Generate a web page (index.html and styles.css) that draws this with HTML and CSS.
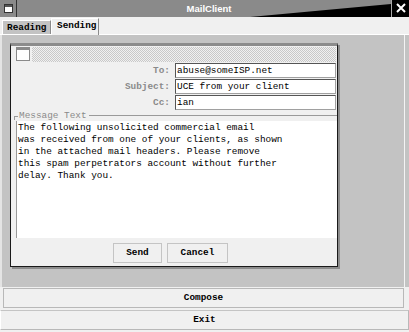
FILE: index.html
```html
<!DOCTYPE html>
<html>
<head>
<meta charset="utf-8">
<link rel="stylesheet" href="styles.css">
</head>
<body>
<div class="app">
  <div class="titlebar">
    <div class="ticon">
      <svg width="17" height="17" viewBox="0 0 17 17"><rect x="4.5" y="4.5" width="8" height="8" fill="#fff" stroke="#333"/><rect x="5" y="5" width="7" height="2" fill="#555"/></svg>
    </div>
    <div class="ttitle">MailClient</div>
    <div class="tclose">
      <svg width="18" height="17" viewBox="0 0 18 17"><path d="M5 4 L13 12 M13 4 L5 12" stroke="#fff" stroke-width="2"/></svg>
    </div>
  </div>
  <div class="tabs">
    <div class="tab">Reading</div>
    <div class="tab active">Sending</div>
  </div>
  <div class="panel">
    <div class="win">
      <div class="wtitle">
        <div class="wicon"></div>
        <div class="stipple"></div>
      </div>
      <div class="row"><div class="lbl">To:</div><div class="inp">abuse@someISP.net</div></div>
      <div class="row"><div class="lbl">Subject:</div><div class="inp">UCE from your client</div></div>
      <div class="row"><div class="lbl">Cc:</div><div class="inp">ian</div></div>
      <div class="group">
        <div class="legend"><span class="lead"></span><span class="ltext">Message Text</span><span class="tail"></span></div>
        <div class="msg">The following unsolicited commercial email
was received from one of your clients, as shown
in the attached mail headers. Please remove
this spam perpetrators account without further
delay. Thank you.</div>
      </div>
      <div class="btns">
        <div class="btn send">Send</div>
        <div class="btn cancel">Cancel</div>
      </div>
    </div>
  </div>
  <div class="bigbtn compose">Compose</div>
  <div class="bigbtn exit">Exit</div>
</div>
</body>
</html>
```
FILE: styles.css
```css
html, body { margin: 0; padding: 0; }
body { background: #f0f0f0; font-family: "Liberation Mono", monospace; font-size: 9.4px; color: #000; }
.app { width: 409px; height: 332px; overflow: hidden; display: flex; flex-direction: column; }
.titlebar { position: relative; height: 17px; display: flex; background: #8a8a8a; box-sizing: border-box; }
.titlebar::before { content: ""; position: absolute; left: 0; top: 0; width: 391px; height: 17px; background: #000; clip-path: polygon(250px 17px, 391px 4px, 391px 17px); }
.ticon { position: relative; width: 17px; height: 17px; background: #8a8a8a; border-right: 1px solid #333; box-sizing: border-box; }
.ticon svg { display: block; }
.ttitle { position: relative; flex: 1; text-align: center; color: #fff; font-family: "Liberation Sans", Arial, sans-serif; font-weight: bold; font-size: 9.5px; line-height: 17px; padding-left: 10px; }
.tclose { position: relative; width: 18px; height: 17px; background: #000; border-left: 1px solid #aaa; box-sizing: border-box; }
.tclose svg { display: block; }
.tabs { height: 18px; display: flex; align-items: flex-end; padding-left: 2px; box-sizing: border-box; border-bottom: 1px solid #fff; }
.tab { font-weight: bold; height: 14px; line-height: 13px; width: 49px; box-sizing: border-box; padding-left: 4px; background: #c3c3c3; border-top: 1px solid #fff; border-left: 1px solid #fff; border-right: 1px solid #8a8a8a; }
.tab.active { height: 17px; line-height: 14px; width: 48px; background: #f0f0f0; margin-bottom: -1px; border-top: 1px solid #fff; border-left: 1px solid #fff; border-right: 1px solid #8a8a8a; padding-left: 5px; }
.panel { height: 252px; background: #c3c3c3; border-left: 2px solid #e4e4e4; box-sizing: border-box; box-shadow: inset -4px 0 0 #c3c3c3, inset -5px 0 0 #f4f4f4; padding-top: 8px; }
.win { margin-left: 8px; width: 328px; height: 224px; box-sizing: border-box; background: #f0f0f0; border-top: 3px solid #8c8c8c; border-left: 1px solid #1a1a1a; border-right: 1px solid #1a1a1a; border-bottom: 1px solid #1a1a1a; box-shadow: 2px 2px 0 #8c8c8c; padding-left: 3px; display: flex; flex-direction: column; }
.wtitle { height: 15px; display: flex; gap: 2px; padding-left: 2px; padding-right: 1px; margin-top: 1px; }
.wicon { width: 14px; height: 14px; box-sizing: border-box; background: #fff; border: 1px solid #8a8a8a; border-top-width: 3px; }
.stipple { flex: 1; background: repeating-conic-gradient(#c8c8c8 0 25%, #f0f0f0 0 50%) 0 0 / 2px 2px; }
.row { display: flex; gap: 5px; height: 15px; margin-top: 1px; align-items: stretch; }
.row:first-of-type { margin-top: 2px; }
.lbl { width: 156px; text-align: right; color: #8a8a8a; font-weight: bold; line-height: 15px; }
.inp { width: 161px; box-sizing: border-box; background: #fff; border: 1px solid #a0a0a0; border-top-color: #555; border-left-color: #555; line-height: 13px; padding-left: 1px; }
.group { display: flex; flex-direction: column; margin-top: 1px; margin-right: 0; }
.legend { display: flex; align-items: center; height: 9px; }
.lead { width: 4px; height: 4px; border-top: 1px solid #9a9a9a; border-left: 1px solid #9a9a9a; margin-top: 5px; box-sizing: border-box; }
.ltext { color: #8a8a8a; padding: 0 2px 0 1px; line-height: 9px; }
.tail { flex: 1; border-top: 1px solid #9a9a9a; }
.msg { margin-left: 2px; margin-top: 1px; height: 117px; background: #fff; white-space: pre; line-height: 12px; padding: 1px 0 0 1px; box-sizing: border-box; border-left: 1px solid #9a9a9a; }
.btns { display: flex; gap: 5px; padding-left: 99px; margin-top: 5px; }
.btn { height: 20px; box-sizing: border-box; border: 1px solid #c4c4c4; background: #f0f0f0; font-weight: bold; text-align: center; line-height: 18px; }
.send { width: 49px; }
.cancel { width: 61px; }
.bigbtn { height: 20px; box-sizing: border-box; background: #f0f0f0; border: 1px solid #b8b8b8; font-weight: bold; text-align: center; line-height: 18px; }
.compose { margin: 1px 5px 0 3px; }
.exit { margin-top: 2px; border-left-color: #fff; border-top-color: #c4c4c4; }
```
